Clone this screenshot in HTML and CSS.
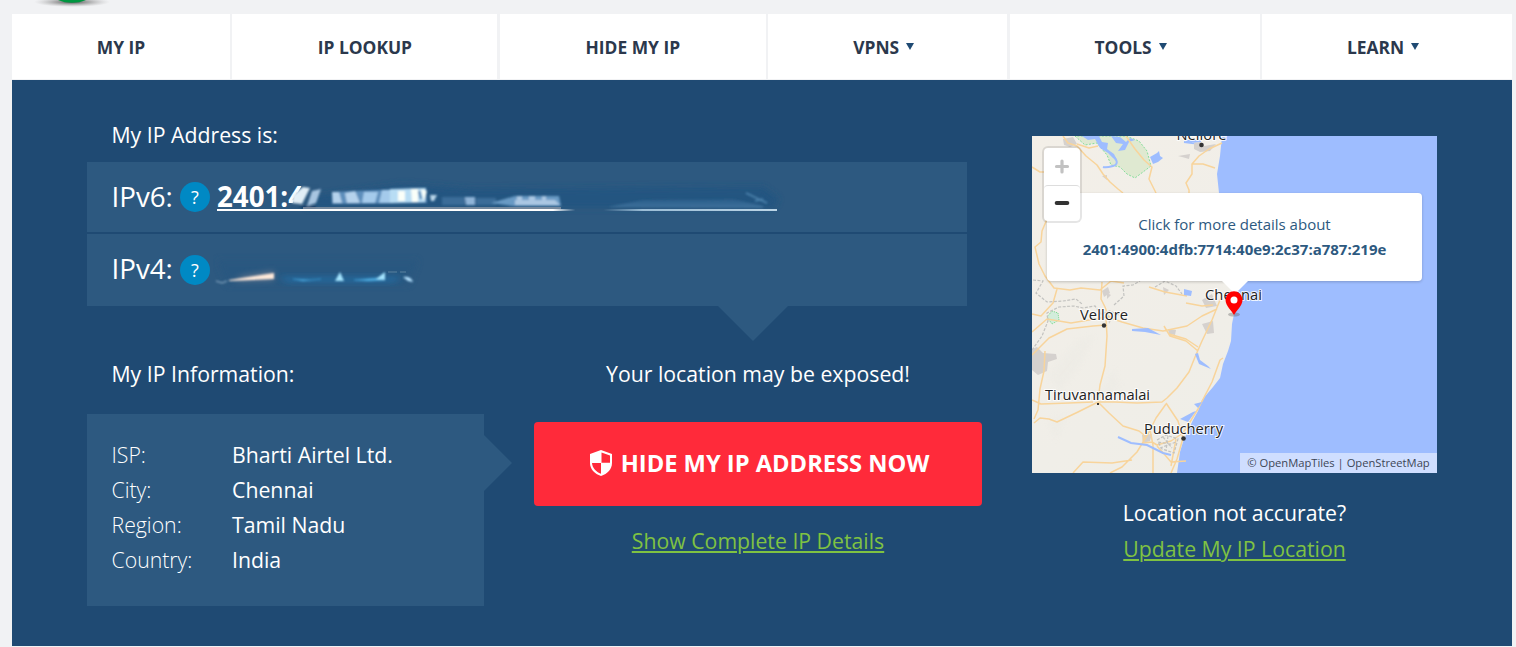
FILE: index.html
```html
<!DOCTYPE html>
<html lang="en">
<head>
<meta charset="utf-8">
<title>My IP Address</title>
<link rel="stylesheet" href="styles.css">
</head>
<body>
<header class="brand">
  <svg class="brand-mark" width="110" height="14" viewBox="0 0 110 14">
    <defs><radialGradient id="shade"><stop offset="0" stop-color="#444" stop-opacity=".95"/><stop offset=".5" stop-color="#777" stop-opacity=".5"/><stop offset="1" stop-color="#aaa" stop-opacity="0"/></radialGradient></defs>
    <ellipse cx="55" cy="2" rx="38" ry="5" fill="url(#shade)"/>
    <ellipse cx="55" cy="-6" rx="19" ry="8.700" fill="#009640"/>
  </svg>
</header>
<nav class="nav">
  <a class="nav-item">MY IP</a>
  <a class="nav-item">IP LOOKUP</a>
  <a class="nav-item">HIDE MY IP</a>
  <a class="nav-item has-menu">VPNS<i class="caret"></i></a>
  <a class="nav-item has-menu">TOOLS<i class="caret"></i></a>
  <a class="nav-item has-menu">LEARN<i class="caret"></i></a>
</nav>
<main class="panel">
  <section class="details">
    <h2 class="title">My IP Address is:</h2>
    <div class="addresses">
      <div class="address">
        <span class="label">IPv6:</span><span class="help">?</span>
        <a class="ip">2401:4</a>
        <svg class="smudge" width="640" height="60" viewBox="0 0 640 60">
          <defs>
            <filter id="b1" x="-20%" y="-60%" width="140%" height="220%"><feGaussianBlur stdDeviation=".9"/></filter>
            <filter id="b4" x="-20%" y="-90%" width="140%" height="280%"><feGaussianBlur stdDeviation="3"/></filter>
            <linearGradient id="line6"><stop offset="0" stop-color="#fff"/><stop offset=".6" stop-color="#fff"/><stop offset=".64" stop-color="#2c587f"/><stop offset=".69" stop-color="#2c587f"/><stop offset=".76" stop-color="#9bbdd6"/><stop offset="1" stop-color="#bcd5e6"/></linearGradient>
            <linearGradient id="haze" x2="0" y2="1"><stop offset="0" stop-color="#2a5f8b"/><stop offset="1" stop-color="#4678a3"/></linearGradient>
          </defs>
          <path d="M94 28 190 15 260 20 550 18 566 30 560 39 94 39Z" fill="#205581" opacity=".9" filter="url(#b4)"/>
          <path d="M83 26 90 15 106 15 102 39 78 39 80 33Z" fill="#2c587f"/>
          <g filter="url(#b1)">
            <path d="M119 23 213 19 214 34 119 35Z" fill="#5d8ebb"/>
            <path d="M80 26 90 18 97 19 89 35 79 34Z" fill="#e1eef6"/>
            <path d="M99 22 108 20 103 34 94 37Z" fill="#a8c5e0"/>
            <path d="M86 37H103V40H90Z" fill="#173e68"/>
            <path d="M119 23 126 23 129 34 120 34ZM132 24 142 22 147 34 134 34Z" fill="#b5d2ec"/>
            <path d="M151 23H165L162 34H149ZM169 21H180V34H166Z" fill="#a4caeb"/>
            <path d="M177 20 213 19 212 33 177 34Z" fill="#b8ddf4"/>
            <path d="M185 22H192V32H185ZM198 20H205V33H199ZM208 20 214 22 211 32Z" fill="#fafff9"/>
            <path d="M206 22 208 30" stroke="#3f79ad" stroke-width="2"/>
            <path d="M217 26H224L221 32H218Z" fill="#b9d5e9"/>
            <path d="M229 28H252V36H229ZM263 29H283V36H263Z" fill="#3a6c98"/>
            <path d="M252 28H262V36H253Z" fill="#8fb4d8"/>
            <path d="M278 34 302 27 346 27 348 37 300 37Z" fill="#699ac4"/>
            <path d="M302 31H342L347 36H302ZM304 27H309V33H304ZM316 27H322V34H316ZM329 27H333V34H329Z" fill="#abc7e3"/>
            <path d="M395 38 430 31 520 30 550 37V39Z" fill="url(#haze)" opacity=".8"/>
            <path d="M533 24 554 34M542 32 550 30" fill="none" stroke="#4f86b0" stroke-width="1.500"/>
          </g>
          <rect x="90" y="38" width="258" height="2" fill="#8f9aa8" opacity=".75"/>
          <rect x="4" y="40" width="560" height="2" fill="url(#line6)"/>
        </svg>
      </div>
      <div class="address second">
        <span class="label">IPv4:</span><span class="help">?</span>
        <svg class="smudge lower-smudge" width="220" height="60" viewBox="0 0 220 60">
          <path d="M4 18H205L196 43H14Z" fill="#275780" opacity=".6" filter="url(#b4)"/>
          <path d="M30 34 61 29 61 38 20 39Z" fill="#8d8994" opacity=".6" filter="url(#b4)"/>
          <path d="M65 35H190L180 40H75Z" fill="#2372ac" opacity=".8" filter="url(#b4)"/>
          <g filter="url(#b1)">
            <path d="M16 38 61 31 61 37 16 39Z" fill="#ffe9da"/>
            <path d="M3 39 9 41 14 39" fill="none" stroke="#9ab8cf"/>
            <path d="M80 37 98 38 108 37 90 39ZM141 38 165 36 172 38 155 39Z" fill="#55b2e5" stroke="#409bd2" stroke-width=".5"/>
            <path d="M127 30 131 39 122 39ZM172 30V38L163 37Z" fill="#a5e5ff"/>
            <path d="M190 35Q198 34 200 40L195 39Z" fill="#b4e1ff"/>
          </g>
          <path d="M175 30H184M187 30H193" stroke="#7196ae" stroke-width=".7"/>
        </svg>
      </div>
    </div>
    <div class="lower">
      <div class="info">
        <h2 class="title">My IP Information:</h2>
        <dl class="facts">
          <dt>ISP:</dt><dd>Bharti Airtel Ltd.</dd>
          <dt>City:</dt><dd>Chennai</dd>
          <dt>Region:</dt><dd>Tamil Nadu</dd>
          <dt>Country:</dt><dd>India</dd>
        </dl>
      </div>
      <div class="action">
        <p class="warning">Your location may be exposed!</p>
        <a class="button">
          <svg class="shield" width="24" height="28" viewBox="0 0 24 28"><path d="M12 1 23 5V14C23 20 18.500 25 12 27 5.500 25 1 20 1 14V5Z" fill="#fff"/><path d="M12.500 3.500 21 6.500V13.700H12.500ZM3 14H12V24.800C7 22.800 3.300 18.800 3 14Z" fill="#ff2a3a"/></svg>
          <span>HIDE MY IP ADDRESS NOW</span>
        </a>
        <a class="link">Show Complete IP Details</a>
      </div>
    </div>
  </section>
  <aside class="location">
    <div class="map">
      <svg class="map-art" width="405" height="337" viewBox="0 0 405 337">
        <defs><linearGradient id="land" x2="1" y2="1"><stop offset="0" stop-color="#f3efe8"/><stop offset=".5" stop-color="#f0eee8"/><stop offset="1" stop-color="#eeeee7"/></linearGradient></defs>
        <rect width="405" height="337" fill="url(#land)"/>
        <path d="M15 240 45 205 62 200 48 230 28 255ZM65 262 82 232 88 250 73 270ZM15 285 35 278 24 305Z" fill="#eae9e3" opacity=".4" filter="url(#b4)"/>
        <path d="M190 0 188 20 185 38 187 57 190 80 196 110 200 135 203 155 202 178 200 188 199 205 196 215 191 228 188 242 181 251 170 264 166 275 161 284 155 297 151 306 148 316 145 337H405V0Z" fill="#9ebdff"/>
        <path d="M43 0 53 9 65 7 75 19 79 29 88 31 95 38 103 42 119 30 115 15 107 5 94 0Z" fill="#dfe9d1" stroke="#6cda8b" stroke-width=".8" stroke-dasharray="2 1.500"/>
        <path d="M50 0 56 4 63 3 68 12 76 17 81 22 85 24 82 18 75 13 76 7 70 6 67 0ZM79 0 84 7 91 8 86 15 93 14 97 6 103 4 98 2 94 6 88 1ZM118 21 125 17 127 15 128 20 131 22 126 26 121 28Z" fill="#9ebdff"/>
        <path d="M82 21Q88 28 81 30T71 31M152 6 160 7 171 8M154 5H169" fill="none" stroke="#9ebdff" stroke-width="2"/>
        <g fill="#d5d1ce">
          <path d="M31 3 41 1 45 8 38 11 32 9ZM162 7 169 6 172 10 184 8 178 15 168 16 162 13ZM146 20 158 18 157 23 150 21ZM70 40 75 39 75 44ZM70 155 76 151 78 157 72 161ZM131 151 137 154 132 159ZM0 213 5 211 11 217 24 218 25 223 16 226 15 235 6 239 0 234ZM170 188 181 185 182 197 175 198ZM136 193 144 194 143 199 137 198ZM110 299 120 298 118 305 111 307ZM75 157 79 159 75 163ZM76 179 81 181 77 188ZM170 164 180 158 185 170 174 172Z"/>
        </g>
        <path d="M15 181 20 175 26 177 27 184 20 188Z" fill="#d2eddb" stroke="#76db8b" stroke-dasharray="1 1"/>
        <g fill="none" stroke="#f8d49b" stroke-width="1.500" stroke-linejoin="round">
          <path d="M31 0 36 7 45 10 54 20 65 29 71 38 78 46 86 53 91 57M45 8 57 12 66 10M94 0 103 13 112 24 120 31 117 43 124 57M190 7 177 13 167 20 160 28 160 38 154 47 157 54 157 57M160 28 171 28 183 32M0 31 8 36 16 36"/>
          <path d="M15 83 10 95 9 106 3 111 7 128 13 140 22 152 38 154 49 152 68 154 79 145 92 147M25 153 21 167 9 180 0 178M0 196 15 183 39 187 57 184 75 181 90 186 111 192 131 195 155 190 170 180 185 173M0 219 17 202 35 193 61 190 74 189M70 146 69 163 73 171 78 185M74 182 75 200 73 230 68 249 66 265M66 266 83 266 105 267 130 266 135 262 145 252 157 236 163 221 170 205 180 184 190 159M132 190 138 200 154 205 166 215M137 198 154 203 166 211M134 268 124 282 116 298 105 316 90 331 78 337M66 266 46 276 25 286 17 283 8 282 2 287M66 266 77 277 91 290 107 295 112 299 111 307 120 306 125 309 139 305 151 297 166 273 180 246 188 224 191 222M134 267 146 285 151 302M41 337 51 326 80 327 100 324M118 294 121 309 121 337M151 302 145 323 139 337M144 303 139 330M0 264 9 268 37 267 61 266M13 215 12 235 8 253 6 274 2 283M125 310 133 319 139 326 154 325M117 151 133 156 155 160M154 167 170 170 181 169"/>
        </g>
        <g fill="none" stroke="#c3c3c0" stroke-width="1.200" stroke-dasharray="3 1.500">
          <path d="M1 144 11 145 4 157 15 166 31 165 44 163 50 168M0 214 10 200 16 185 15 177 27 171 42 170 51 172 63 170 69 178 78 175 89 180M82 169 92 160 91 150 101 149 108 145M123 151 133 145 144 150 150 158M125 304 134 299 146 303 142 317 130 313 126 306 138 308M131 301 140 312M128 312 144 306M136 300 134 315"/>
        </g>
        <path d="M152 153 160 155 159 160 152 159ZM100 193 116 192 129 199 113 196 100 195ZM166 217 168 224 176 230 179 233 167 228 163 218ZM148 283 161 276 164 275 156 286ZM162 268 170 266 166 272Z" fill="#9ebdff"/>
        <path d="M86 301 99 307 115 309 131 317 139 319" fill="none" stroke="#9ebdff" stroke-width="2"/>
        <g fill="#333"><circle cx="169.500" cy="9" r="2.300"/><circle cx="72" cy="189.500" r="2.200"/><rect x="65" y="267" width="2" height="2"/><circle cx="151.500" cy="302.500" r="2.300"/></g>
        <g class="places">
          <text x="144.500" y="4" textLength="50">Nellore</text>
          <text x="173" y="163.500" textLength="57">Chennai</text>
          <text x="48" y="184" textLength="48">Vellore</text>
          <text x="13" y="264" textLength="105">Tiruvannamalai</text>
          <text x="112" y="297.500" textLength="79">Puducherry</text>
        </g>
      </svg>
      <a class="popup"><span>Click for more details about</span><b>2401:4900:4dfb:7714:40e9:2c37:a787:219e</b></a>
      <svg class="pin" width="26" height="28" viewBox="0 0 26 28"><ellipse cx="13" cy="23.500" rx="6" ry="2" fill="#555" opacity=".35"/><path d="M13 24C11 20 4.500 15 4.500 8.700A8.500 8.500 0 0 1 21.500 8.700C21.500 15 15 20 13 24Z" fill="#f00"/><circle cx="13" cy="9" r="3.500" fill="#fff"/></svg>
      <div class="zoom">
        <svg width="36" height="37" viewBox="0 0 36 37"><path d="M18 13V24M12.500 18.500H23.500" stroke="#c2c2c2" stroke-width="3.200" stroke-linecap="round"/></svg>
        <svg class="zoom-out" width="36" height="36" viewBox="0 0 36 36"><path d="M12.500 17.500H23.500" stroke="#333" stroke-width="4" stroke-linecap="round"/></svg>
      </div>
      <div class="credit">© OpenMapTiles | OpenStreetMap</div>
    </div>
    <p class="question">Location not accurate?</p>
    <a class="link update">Update My IP Location</a>
  </aside>
</main>
</body>
</html>
```

FILE: styles.css
```css
* { box-sizing: border-box; }
body {
  margin: 0;
  padding: 0 4px 0 12px;
  background: #f1f2f4;
  color: #fff;
  font-family: "Open Sans", "Noto Sans", sans-serif;
  font-size: 21.250px;
  overflow: hidden;
}
h2, p, dl, dd { margin: 0; font-weight: 400; }
.brand { height: 14px; }
.brand-mark { display: block; margin-left: 5px; }
.nav {
  display: grid;
  grid-template-columns: 218fr 265fr 266fr 239fr 250fr 250fr;
  gap: 2.4px;
  height: 66px;
  padding-bottom: 1px;
}
.nav-item {
  display: flex;
  align-items: center;
  justify-content: center;
  gap: 7px;
  background: #fff;
  color: #2b384c;
  font-size: 17.400px;
  font-weight: 700;
}
.has-menu { padding-right: 8px; }
.caret {
  border: solid transparent;
  border-width: 7.500px 4px 0;
  border-top-color: #1f4a73;
}
.panel {
  display: flex;
  gap: 50px;
  height: 566px;
  padding: 40px 75px 0;
  background: #1f4a73;
}
.details { width: 895px; }
.title {
  padding-left: 24.500px;
  font-size: 21.250px;
  line-height: 30px;
}
.addresses {
  position: relative;
  display: grid;
  grid-template-rows: 70px 72px;
  gap: 2px;
  width: 880px;
  margin-top: 12px;
}
.addresses::after {
  content: "";
  position: absolute;
  top: 144px;
  left: 631px;
  border: solid transparent;
  border-width: 35px 35px 0;
  border-top-color: #2d5980;
}
.address {
  position: relative;
  display: flex;
  align-items: center;
  padding-left: 24.500px;
  background: #2d5980;
  font-size: 27.700px;
}
.label { width: 68.500px; padding-bottom: 2px; }
.second .label { padding-bottom: 4px; }
.help {
  width: 30px;
  height: 30px;
  border-radius: 50%;
  background: #0089c4;
  font-size: 18px;
  line-height: 31px;
  text-align: center;
}
.ip { margin-left: 7px; padding-bottom: 2px; font-weight: 700; font-size: 27.700px; }
.smudge { position: absolute; left: 126px; top: 7px; }
.lower-smudge { top: 8px; }
.lower { display: flex; gap: 50px; margin-top: 53px; }
.info { width: 397px; }
.facts {
  position: relative;
  display: grid;
  grid-template-columns: 120.500px 1fr;
  grid-auto-rows: 35.300px;
  height: 192px;
  margin-top: 25px;
  padding: 22.500px 24.500px;
  background: #2d5980;
  line-height: 35px;
}
.facts::after {
  content: "";
  position: absolute;
  left: 397px;
  top: 21px;
  border: solid transparent;
  border-width: 28px 0 28px 28px;
  border-left-color: #2d5980;
}
.facts dt { font-weight: 300; }
.action {
  display: flex;
  flex-direction: column;
  align-items: center;
  width: 448px;
}
.warning { line-height: 30px; }
.button {
  display: flex;
  align-items: center;
  justify-content: center;
  gap: 8px;
  width: 448px;
  height: 84px;
  margin: 33px 0 20px;
  padding: 0 0 3px 2px;
  border-radius: 4px;
  background: #ff2a3a;
  font-size: 23.700px;
  font-weight: 700;
}
.link {
  color: #7fc242;
  line-height: 30px;
  text-decoration: underline;
  text-decoration-thickness: 2px;
  text-underline-offset: 2px;
}
.location {
  display: flex;
  flex-direction: column;
  align-items: center;
  width: 405px;
  padding-top: 16px;
}
.map { position: relative; width: 405px; height: 337px; overflow: hidden; flex: none; }
.map-art { display: block; }
.places { fill: #222; font-size: 14.700px; paint-order: stroke; stroke: #fffd; stroke-width: 2px; }
.popup {
  position: absolute;
  left: 15px;
  top: 57px;
  display: flex;
  flex-direction: column;
  align-items: center;
  width: 375px;
  height: 88px;
  padding-top: 19px;
  border-radius: 4px;
  background: #fff;
  box-shadow: 0 1px 3px #0003;
  color: #2d5980;
  font-size: 15px;
  line-height: 25px;
}
.popup b { font-weight: 700; }
.popup::after {
  content: "";
  position: absolute;
  top: 88px;
  left: 175px;
  border: solid transparent;
  border-width: 13px 13px 0;
  border-top-color: #fff;
}
.pin { position: absolute; left: 189px; top: 154.500px; }
.zoom {
  position: absolute;
  left: 12px;
  top: 12px;
  display: flex;
  flex-direction: column;
  width: 36px;
  height: 73px;
  border-radius: 4px;
  background: #fff;
  box-shadow: 0 0 0 2px #0000001a;
}
.zoom-out { border-top: 1px solid #ddd; border-radius: 4px; }
.credit {
  position: absolute;
  right: 0;
  bottom: 0;
  width: 197px;
  background: #ffffff80;
  color: #3c4656;
  font-size: 11.200px;
  line-height: 20px;
  text-align: center;
}
.question { margin-top: 25px; line-height: 30px; }
.update { margin-top: 6px; }
```
